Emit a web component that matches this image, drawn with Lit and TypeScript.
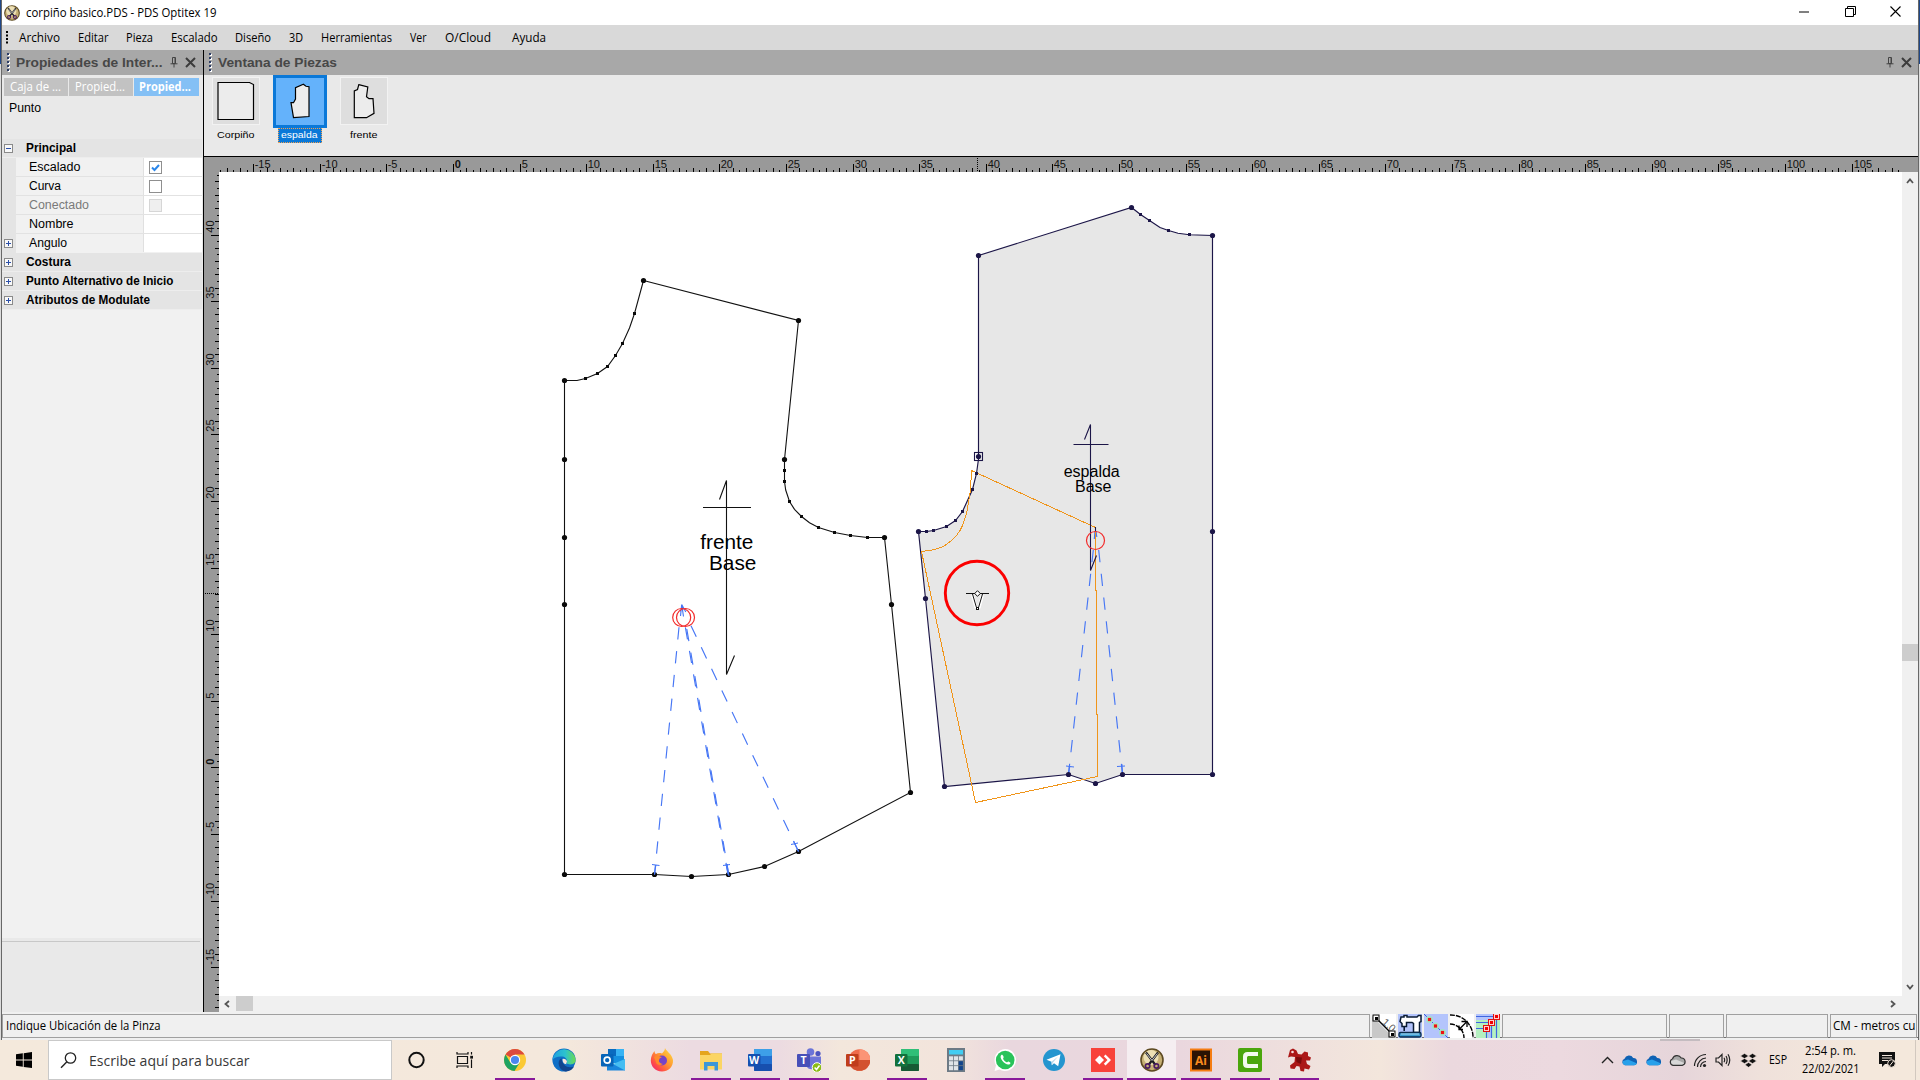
import { LitElement, html, svg, css, nothing } from "lit";
import { customElement } from "lit/decorators.js";

type Pt = [number, number];

/* A line of text set to an exact advance width. */
const label = (text: string, w: number, cls = "", h = 16, base = 12) => html`
  <svg class="lbl ${cls}" width=${w + 2} height=${h}>
    <text x="0" y=${base} textLength=${w} lengthAdjust="spacingAndGlyphs">${text}</text>
  </svg>`;

const pts = (p: Pt[]) => p.map((q) => q.join(",")).join(" ");

const MENU: [string, number, number][] = [
  ["Archivo", 41, 18], ["Editar", 30.5, 17], ["Pieza", 27, 18], ["Escalado", 46.5, 17.5], ["Diseño", 36, 18],
  ["3D", 14, 18], ["Herramientas", 71, 18], ["Ver", 16.5, 18.5], ["O/Cloud", 46, 21], ["Ayuda", 34, 0],
];

/* ---- canvas geometry ---- */
const FRONT: Pt[] = [
  [643.5, 280.5], [798.5, 320.5], [784.5, 459.5], [784.5, 470.5], [784.5, 481.5], [785.7, 490], [789.5, 501.5], [794.5, 509.3],
  [801.5, 516.5], [809.5, 522.8], [818.5, 527.5], [834.5, 532.5], [850.5, 535.5], [867.5, 537.5], [884.5, 537.5], [891.5, 604.5],
  [910.5, 792.5], [798.5, 851.5], [764.5, 866.5], [728.5, 874.5], [691.5, 876.5], [654.5, 874.5], [564.5, 874.5],
  [564.5, 380.5], [577, 380.5], [585.5, 378.5], [597.5, 373.5], [607.5, 366.5], [615.5, 355.5], [622.5, 343.5], [629.5, 328],
  [634.5, 313.5],
];
const FRONT_BIG: Pt[] = [
  [643.5, 280.5], [798.5, 320.5], [784.5, 459.5], [884.5, 537.5], [891.5, 604.5], [910.5, 792.5], [798.5, 851.5],
  [764.5, 866.5], [728.5, 874.5], [691.5, 876.5], [654.5, 874.5], [564.5, 874.5], [564.5, 604.5], [564.5, 537.5],
  [564.5, 459.5], [564.5, 380.5],
];
const FRONT_SMALL: Pt[] = [
  [634.5, 313.5], [622.5, 343.5], [615.5, 355.5], [607.5, 366.5], [597.5, 373.5], [585.5, 378.5], [784.5, 470.5],
  [784.5, 481.5], [789.5, 501.5], [801.5, 516.5], [818.5, 527.5], [834.5, 532.5], [850.5, 535.5], [867.5, 537.5],
];
const BACK: Pt[] = [
  [978.5, 255.5], [1131.5, 207.5], [1140.5, 214.5], [1149.5, 220.5], [1160, 227.5], [1168.5, 230.5], [1178, 233.3],
  [1189.5, 234.8], [1212.5, 235.5], [1212.5, 774.5], [1122.5, 774.5], [1095.5, 783.5], [1068.5, 774.5], [944.5, 786.5],
  [925.5, 598.5], [918.5, 531.5], [926.5, 531.5], [933.5, 530.5], [946.5, 526.5], [955.5, 520.5], [962.5, 511.5],
  [972.5, 489.5], [976.5, 473.5], [978.5, 459],
];
const BACK_BIG: Pt[] = [
  [978.5, 255.5], [1131.5, 207.5], [1212.5, 235.5], [1212.5, 531.5], [1212.5, 774.5], [1122.5, 774.5], [1095.5, 783.5],
  [1068.5, 774.5], [944.5, 786.5], [925.5, 598.5], [918.5, 531.5], [978.5, 456.5],
];
const BACK_SMALL: Pt[] = [
  [1140.5, 214.5], [1149.5, 220.5], [1168.5, 230.5], [1189.5, 234.5], [976.5, 473.5], [972.5, 489.5], [962.5, 511.5],
  [955.5, 520.5], [946.5, 526.5], [933.5, 530.5], [926.5, 531.5],
];
const GHOST: Pt[] = [
  [971.5, 470.5], [1095.5, 527.5], [1095.5, 590], [1096.5, 590], [1096.5, 714], [1097.5, 714], [1097.5, 776.5],
  [975.5, 802.5], [921.5, 551.5], [933.5, 549.8], [941, 547.5], [946.5, 544.5], [952, 540], [956.5, 535.5], [960, 530.5],
  [962.5, 525.5], [965, 518.5], [966.8, 512.5], [968.5, 501.5], [970.5, 490],
];

const ORIGIN_X = 454;
const ORIGIN_Y = 767.3;
const UNIT = 13.32;

const dots = (big: Pt[], small: Pt[], color: string) => svg`
  ${big.map(([x, y]) => svg`<circle cx=${x} cy=${y} r="2.6" fill=${color}/>`)}
  ${small.map(([x, y]) => svg`<rect x=${x - 1.5} y=${y - 1.5} width="3" height="3" fill=${color}/>`)}`;

const leg = (x1: number, y1: number, x2: number, y2: number) =>
  svg`<line x1=${x1} y1=${y1} x2=${x2} y2=${y2} stroke-dasharray="12.3 11.6"/>`;

@customElement("pattern-canvas")
export class PatternCanvas extends LitElement {
  static styles = css`
    :host { display: block; width: 1683px; height: 824px; background: #fff; }
    svg { display: block; }
    text { font-family: "Liberation Sans", Arial, sans-serif; fill: #000; }
    .name { font-size: 20.8px; }
    .name2 { font-size: 16px; }
    .ghost { shape-rendering: crispEdges; }
  `;
  render() {
    return html`<svg width="1683" height="824" viewBox="219 172 1683 824">
      <g fill="none" stroke="#111" stroke-width="1.1">
        <polygon points=${pts(FRONT)}/>
        <path d="M719.5 499.5L726.5 480.5V674.5L734.5 655.5M703 507.5H751"/>
      </g>
      ${dots(FRONT_BIG, FRONT_SMALL, "#0a0a0a")}
      <text class="name" x="700.2" y="549">frente</text>
      <text class="name" x="709" y="570">Base</text>
      <polygon points=${pts(BACK)} fill="#e7e7e7" stroke="#1c1648" stroke-width="1.15"/>
      <g fill="none" stroke="#4676f5" stroke-width="1.15">
        ${leg(679, 627.3, 654.5, 874.5)}
        ${leg(685.4, 627.3, 728, 874.5)} ${leg(686.8, 629, 729, 876)}
        ${leg(691, 625.7, 798.5, 851.5)}
        ${leg(1093.3, 550, 1068.5, 774.5)} ${leg(1098.7, 550, 1122.5, 774.5)}
        <path d="M680.5 616L681.7 604.5L683.5 616.5M681.7 604.5L685.8 612M679.8 611L683 608
          M652 864.5L659.5 865.5M655.8 865L654.5 874.5M723 865.5L730 864.5M727 864L728.5 874.5M726 864L728.5 874.5
          M791 844.5L798 843M793.5 841L798.5 851.5M1066 766L1074 767M1069.5 766L1068.5 774.5M1117 766.5L1125 766M1121.8 764L1122.5 774.5
          M1095 531L1094.3 539M1096 531L1096.8 537"/>
      </g>
      <polygon class="ghost" points=${pts(GHOST)} fill="none" stroke="#f0951a" stroke-width="1"/>
      <g fill="none" stroke="#1c1648" stroke-width="1.1">
        <path d="M1084.5 439.5L1090.5 424.5V570.5L1096.5 555.5M1073.5 444.5H1108.5"/>
        <rect x="974.5" y="452.5" width="8" height="8"/>
        <path d="M1095.5 527V532"/>
      </g>
      ${dots(BACK_BIG, BACK_SMALL, "#1c1648")}
      <text class="name2" x="1063.7" y="477">espalda</text>
      <text class="name2" x="1075" y="492">Base</text>
      <g fill="none" stroke="#f22a2a" stroke-width="1.2">
        <circle cx="681.7" cy="617.5" r="9"/><circle cx="685.5" cy="617.5" r="9"/>
        <circle cx="1095.5" cy="540.5" r="9"/>
      </g>
      <circle cx="977" cy="593" r="31.7" fill="none" stroke="#fb0000" stroke-width="2.9"/>
      <path d="M972.5 595L976 608M982.5 595L979 608" stroke="#fff" stroke-width="3" fill="none"/>
      <g fill="#fff" stroke="#111" stroke-width="1">
        <path d="M966 593.5H989" fill="none"/>
        <path d="M972.5 594L976.3 607M982.5 594L978.7 607" fill="none"/>
        <path d="M977.5 590.7L980.3 593.5L977.5 596.3L974.7 593.5Z"/>
        <rect x="976.5" y="607.5" width="2" height="2"/>
      </g>
    </svg>`;
  }
}

@customElement("ruler-bar")
export class RulerBar extends LitElement {
  static properties = { vertical: { type: Boolean } };
  declare vertical: boolean;
  static styles = css`
    :host { display: block; background: #999; }
    svg { display: block; }
    text { font: 11px "Liberation Sans", Arial, sans-serif; fill: #111; }
    text.zero { font-weight: 700; }
    path { stroke: #000; fill: none; shape-rendering: crispEdges; }
  `;
  render() {
    let d = "";
    const marks: [number, number][] = [];
    if (this.vertical) {
      for (let i = -36; i <= 89; i++) {
        const y = Math.round(ORIGIN_Y - (i * UNIT) / 2) + 0.5;
        if (y < 173 || y > 1011) continue;
        d += `M${i % 10 === 0 ? 211 : i % 2 === 0 ? 215 : 217} ${y}H219`;
        if (i % 10 === 0) marks.push([i / 2, y]);
      }
      return html`<svg width="15" height="840" viewBox="204 172 15 840">
        <path d=${d}/><path d="M205 593.5H219" stroke-dasharray="1 1"/>
        ${marks.map(([n, y]) => svg`<text class=${n === 0 ? "zero" : ""} transform="translate(213.5 ${y}) rotate(-90)" x="2.8" y="0">${n}</text>`)}
      </svg>`;
    }
    for (let i = -35; i <= 217; i++) {
      const x = Math.round(ORIGIN_X + (i * UNIT) / 2) - 0.5;
      if (x < 219) continue;
      d += `M${x} ${i % 10 === 0 ? 164 : i % 2 === 0 ? 168 : 170}V172`;
      if (i % 10 === 0) marks.push([i / 2, x]);
    }
    return html`<svg width="1714" height="15" viewBox="204 157 1714 15">
      <path d=${d}/><path d="M977.5 158V172" stroke-dasharray="1 1"/>
      ${marks.map(([n, x]) => svg`<text class=${n === 0 ? "zero" : ""} x=${x + 1.2} y="167.5">${n}</text>`)}
    </svg>`;
  }
}

const scissors = svg`
  <circle cx="12" cy="12" r="11" fill="#c6b074" stroke="#5d4a22" stroke-width="1.6"/>
  <circle cx="11" cy="9.5" r="7.5" fill="#ecdfb4"/>
  <path d="M6 4.5L15.5 17M18 4.5L8.5 17" stroke="#1c1c22" stroke-width="2.2"/>
  <path d="M6.6 5.5L12 12.4M17.4 5.5L12 12.4" stroke="#f4f4f4" stroke-width=".8"/>
  <circle cx="7.6" cy="18" r="2.2" fill="none" stroke="#4b1c63" stroke-width="1.7"/>
  <circle cx="16.4" cy="18" r="2.2" fill="none" stroke="#4b1c63" stroke-width="1.7"/>`;

const office = (letter: string, dark: string, c1: string, c2: string, c3: string) => svg`
  <rect x="6" y="1" width="18" height="22" rx="1.2" fill=${c2}/>
  <rect x="6" y="1" width="18" height="7" rx="1" fill=${c1}/>
  <rect x="6" y="16" width="18" height="7" rx="1" fill=${c3}/>
  <rect x="0" y="6" width="12.5" height="12.5" rx="1" fill=${dark}/>
  <text x="6.2" y="16" text-anchor="middle" class="app-letter">${letter}</text>`;

const APPS: { icon: unknown; open?: boolean; active?: boolean }[] = [
  { icon: svg`<circle cx="11.500" cy="12" r="7.2" fill="none" stroke="#111" stroke-width="2"/>` },
  { icon: svg`<path d="M3.500 8.500H13.500V15.500H3.500ZM3 4V6H14V4M3 20V18H14V20M17.500 4V6.500M17.500 11.500V20" fill="none" stroke="#111" stroke-width="1.2"/><rect x="16.2" y="7.8" width="2.8" height="2.8" fill="#111"/>` },
  { open: true, icon: svg`<circle cx="12" cy="12" r="11" fill="#fbc934"/>
      <path d="M12 12L2.5 6.5A11 11 0 0 1 21.5 6.5H12Z" fill="#dc4a3d"/><path d="M2.5 6.5A11 11 0 0 0 11.5 23L16.8 14.6L7.3 14.6Z" fill="#1ea362"/>
      <circle cx="12" cy="12" r="5.2" fill="#fff"/><circle cx="12" cy="12" r="4.1" fill="#4a86ee"/>` },
  { icon: svg`<defs><linearGradient id="eg" x1="0" x2="1"><stop offset="0" stop-color="#1f9fe0"/><stop offset=".55" stop-color="#2cc2cf"/><stop offset="1" stop-color="#6bdb4f"/></linearGradient></defs>
      <circle cx="12" cy="12" r="11.6" fill="#0f6fc6"/><path d="M.6 11A11.6 11.6 0 0 1 23.6 12C23.6 17 17 17.2 14.3 15.3C16 13 14.5 9 10.5 8.6C6 8 2 9.500 .6 12Z" fill="url(#eg)"/>
      <path d="M9.500 10.200C4 13 7 22.500 13.500 23.500C18 23.400 20.800 21 22 18.500C16 20.600 10.500 18 9.500 10.200Z" fill="#11458f"/><path d="M10.600 11A3.400 3.400 0 0 1 15 13.500C14.500 15 14 15.200 14.400 16.200C11.500 16 10.300 13.500 10.600 11Z" fill="#f4e6dc"/>` },
  { icon: svg`<rect x="7" y="1" width="16" height="14" fill="#1590e0"/><rect x="15" y="1" width="8" height="7" fill="#38b3f4"/><rect x="7" y="1" width="8" height="7" fill="#0a6bc0"/>
      <path d="M6 12L15 17L24 11V22.500H6Z" fill="#1a86dc"/><path d="M24 11V22.500L12 16Z" fill="#45bdf2"/><rect x="0" y="6" width="12.500" height="12.500" rx="1" fill="#0864b8"/>
      <circle cx="6.200" cy="12.200" r="3" fill="none" stroke="#fff" stroke-width="1.700"/>` },
  { icon: svg`<defs><linearGradient id="ff" x1="1" y1="0" x2="0" y2="1"><stop offset="0" stop-color="#ffe645"/><stop offset=".45" stop-color="#ff9630"/><stop offset=".75" stop-color="#ff4a48"/><stop offset="1" stop-color="#e3168d"/></linearGradient></defs>
      <path d="M15 0C16 3 22 6 23 12C23.500 19 18 23.500 12 23.500C5 23.500 .8 18 .8 12.500C.8 8 3 5 4.500 3C4.500 5 5.500 6 6 6C8 4.800 10 5 12 5.500C13 4 15 3 15 0Z" fill="url(#ff)"/>
      <circle cx="12" cy="12.500" r="5" fill="#7544c9"/><path d="M4 9C7 6.500 9 8 12 9C10 10 9.500 10.500 9 12C8.500 14 10 15.500 13 16C10.500 17.500 7.500 17 6.500 15.500Z" fill="#ff8a2b"/>` },
  { open: true, icon: svg`<path d="M1 3H9L11 5.500H23V21H1Z" fill="#e5a51d"/><path d="M1 7H11L12.500 5.500H23V21.500H1Z" fill="#fbd564"/><path d="M5 14H19V22.500H15.500V18H8.500V22.500H5Z" fill="#3c97d8"/>` },
  { open: true, icon: office("W", "#1450b0", "#3d9fe8", "#2370d0", "#174fae") },
  { open: true, icon: svg`<circle cx="13.500" cy="4" r="3.800" fill="#6b74d8"/><circle cx="21" cy="5.500" r="2.600" fill="#4c54c0"/><path d="M10 8.500H24V16C24 19 21 20 19 18.500C17 22 12 22 10 19Z" fill="#6d75d9"/>
      <rect x="0" y="6" width="13" height="13" rx="1" fill="#474fb8"/><text x="6.500" y="16" text-anchor="middle" class="app-letter">T</text>
      <circle cx="20" cy="19.500" r="4.800" fill="#8cbd18" stroke="#fff"/><path d="M17.600 19.500L19.500 21.500L22.500 17.500" stroke="#fff" stroke-width="1.500" fill="none"/>` },
  { icon: svg`<circle cx="13.500" cy="12" r="10.800" fill="#ee6b4b"/><path d="M13.500 1.200A10.800 10.800 0 0 1 24.300 12H13.500Z" fill="#fb9476"/><path d="M2.700 12H24.300A10.800 10.800 0 0 1 2.700 12Z" fill="#d3522f"/>
      <rect x="0" y="6" width="12.500" height="12.500" rx="1" fill="#c03d1c"/><text x="6.300" y="16" text-anchor="middle" class="app-letter">P</text>` },
  { open: true, icon: office("X", "#12713c", "#30bf78", "#1f9a5a", "#175a35") },
  { icon: svg`<rect x="3" y="0" width="18" height="24" fill="#6d7a85"/><rect x="5" y="2" width="14" height="4.500" fill="#41cdf2"/>
      ${[0, 1, 2].map((r) => [0, 1, 2].map((c) => svg`<rect x=${5 + c * 4.900} y=${8.300 + r * 4.900} width="4.100" height="4.100" fill=${c === 2 && r > 0 ? "#12458c" : "#dfe4e8"}/>`))}` },
  { open: true, icon: svg`<path d="M12 1A11 11 0 1 1 6.500 21.500L1.500 23L3 17.500A11 11 0 0 1 12 1Z" fill="#fff"/><circle cx="12.200" cy="12" r="9.300" fill="#29c35a"/>
      <path d="M8.500 6.800C7 8 7.300 10.500 9.500 13C12 16 15 17.500 17 16C18 15 17.500 14.500 15.500 13.500C14.500 13.200 14.500 15 13 14C11.500 13 10.500 11.800 10 10.700C11.500 9.500 10 6.500 8.500 6.800Z" fill="#fff"/>` },
  { icon: svg`<circle cx="12" cy="12" r="11" fill="#2495cf"/><path d="M4.500 11.800L18.500 6.300L16.200 18.200L12 15.200L9.800 17.300L9.500 13.700Z" fill="#fff"/><path d="M9.500 13.700L16 8.600L11 14.500L9.800 17.300Z" fill="#bcd9ea"/>` },
  { open: true, icon: svg`<rect width="24" height="24" fill="#f8423a"/><path d="M8.500 7.500L13 12L8.500 16.500L4 12Z" fill="#fff"/><path d="M12.800 8.200L14.500 6.500L20 12L14.500 17.500L12.800 15.800L16.500 12Z" fill="#fff"/>` },
  { open: true, active: true, icon: scissors },
  { open: true, icon: svg`<rect x="2" y="1.500" width="20" height="21" fill="#2a1304" stroke="#f57c12" stroke-width="2"/><text x="12" y="16.500" text-anchor="middle" class="ai-letter">Ai</text>` },
  { open: true, icon: svg`<rect width="24" height="24" rx="2" fill="#4ba60d"/><path d="M20 4H9.500C6.500 4 5 5.500 5 8.500V15.500C5 18.500 6.500 20 9.500 20H20V16H11C9.700 16 9 15.500 9 14.200V9.800C9 8.500 9.700 8 11 8H20Z" fill="#f3faee"/>` },
  { open: true, icon: svg`<path d="M3 2L6 .5L9.500 2.500L11 6L14.500 6.500L17.500 3.500L21 4.500L21 8L24 9.500L23 12.500L19 12.500L20 16L23.500 18L22 21.500L17.500 20.500L17 23.500L13.500 23L12.500 18.500L9.500 18L7.500 21L3.500 20.500L3 17.500L7.500 14L8 9L4 8.500L1 9.500Z" fill="#ab1717"/>
      <path d="M9 9L15 9.500L14 16L9.500 14Z" fill="#7a0b0b"/><circle cx="5.500" cy="4" r="1.300" fill="#f4dede"/>` },
];

const cloud = (fill: string, top: string, stroke = "none") => html`<svg width="17" height="12" viewBox="0 0 17 12">
  <path d="M4 11.300A3.400 3.400 0 0 1 3.500 4.800A4.800 4.800 0 0 1 12.200 4A3.700 3.700 0 0 1 13.200 11.300Z" fill=${top}/>
  <path d="M4 11.300A3.400 3.400 0 0 1 2 7L7 5.500L14 8.500L15.800 9.500A3 3 0 0 1 13.200 11.300Z" fill=${fill}/>
  <path d="M4 11.300A3.400 3.400 0 0 1 3.500 4.800A4.800 4.800 0 0 1 12.200 4A3.700 3.700 0 0 1 13.200 11.300Z" fill="none" stroke=${stroke} stroke-width="1.200"/></svg>`;

const pin = html`<svg width="8" height="11" viewBox="0 0 8 11"><path d="M2.500 .5H5.500V6.500H2.500ZM.5 6.800H7.500M4 7V10.500M5 1V6" fill="none" stroke="#444" stroke-width="1"/></svg>`;
const cross = html`<svg width="11" height="11" viewBox="0 0 11 11"><path d="M1 1L10 10M10 1L1 10" stroke="#3c3c3c" stroke-width="2"/></svg>`;
const box = (plus: boolean) => html`<svg width="9" height="9"><rect x=".5" y=".5" width="8" height="8" fill="#f8f8f8" stroke="#8a8a8a"/>
  <path d=${plus ? "M2 4.500H7M4.500 2V7" : "M2 4.500H7"} stroke="#2c4fa8"/></svg>`;

@customElement("app-root")
export class AppRoot extends LitElement {
  static styles = css`
    :host { display: block; width: 1920px; height: 1080px; overflow: hidden; font-family: "Liberation Sans", Arial, sans-serif; }
    * { box-sizing: border-box; }
    svg { display: block; flex: none; }
    .lbl { overflow: visible; font-family: "Open Sans", "Noto Sans", sans-serif; font-size: 12px; fill: #000; }
    .arial { font-family: "Liberation Sans", Arial, sans-serif; font-size: 12px; }
    .bold { font-weight: 700; }
    .dim { fill: #7a7a7a; }
    .white { fill: #fff; }
    .dock { font-family: "Liberation Sans", Arial, sans-serif; font-size: 13px; font-weight: 700; fill: #474747; }
    .tiny { font-family: "Liberation Sans", Arial, sans-serif; font-size: 9.500px; }
    .search-text { font-size: 15px; fill: #383838; }
    .screen { display: flex; flex-direction: column; width: 1920px; height: 1080px; }
    .shell { display: grid; grid-template-columns: 2px 1916px 2px; height: 1040px; }
    .edge { display: flex; flex-direction: column; background: #dcdcdc; }
    .edge::before { content: ""; height: 64px; background: #1f4788; }
    .edge.left { border-right: 1px solid #686868; }
    .edge.right { border-left: 1px solid #686868; }
    .window { display: flex; flex-direction: column; background: #f0f0f0; }
    .title { display: flex; align-items: center; height: 25px; background: #fff; padding: 0 17px 0 2px; }
    .title .lbl { margin-left: 5.500px; }
    .controls { display: flex; gap: 34.500px; margin-left: auto; padding-bottom: 3px; }
    .menu { display: flex; align-items: center; height: 25px; background: #d9d9d9; padding-left: 4px; }
    .menu .items { display: flex; padding-left: 10px; }
    .body { display: grid; grid-template-columns: 201px 1px 1714px; height: 962px; }
    .divider { background: #000; }
    .side { display: flex; flex-direction: column; background: #e9e9e9; }
    .bar { display: flex; align-items: center; height: 25px; background: #a8a8a8; padding-left: 5px; flex: none; }
    .bar .lbl { margin-left: 6px; }
    .bar .end { display: flex; align-items: center; gap: 7px; margin-left: auto; padding-bottom: 1px; }
    .bar .end.l { padding-right: 7.500px; }
    .bar .end.r { padding-right: 6px; }
    .tabs { display: flex; gap: 1px; padding: 3px 0 0 2px; height: 21px; }
    .tab { width: 64px; height: 18px; background: #c2c2c2; padding: 1px 0 0 6px; }
    .tab.on { width: 65px; background: #84c0f5; padding-left: 5px; }
    .kind { height: 43px; padding: 4px 0 0 7px; }
    .grid { display: flex; flex-direction: column; width: 200px; background: #f1f1f1; height: 799px; }
    .row { display: grid; grid-template-columns: 14px 127px 59px; height: 19px; border-bottom: 1px solid #e2e2e2; }
    .row .g { display: flex; align-items: center; padding-left: 2px; background: #e4e4e4; margin-bottom: -1px; }
    .row .n { padding: 1px 0 0 13px; background: #f1f1f1; }
    .row .v { display: flex; align-items: center; background: #fff; border-left: 1px solid #e0e0e0; padding-left: 4.500px; }
    .row.head { grid-template-columns: 14px 1fr; border-bottom-color: #ededed; background: #e4e4e4; }
    .row.head .g { margin: 0; }
    .row.head .n { background: #e4e4e4; padding: 1px 0 0 10px; }
    .row.last { border-bottom-color: #f1f1f1; }
    .check { width: 13px; height: 13px; border: 1px solid #8f8f8f; background: #fff; }
    .check.off { border-color: #d6d6d6; background: #efefef; }
    .help { flex: 1; margin-top: 3px; border-top: 1px solid #c8c8c8; width: 198px; }
    .main { display: flex; flex-direction: column; }
    .pieces { display: flex; gap: 10px; height: 81px; background: #e9e9e9; padding-left: 5px; }
    .piece { display: flex; flex-direction: column; align-items: center; width: 54px; }
    .thumb { width: 48px; height: 48px; margin: 2px 0 3px; background: #dedede; border: 1px solid #f2f2f2; }
    .piece.on .thumb { width: 54px; height: 53px; margin: 0; background: #64b2fb; border: 3px solid #0a78d8; }
    .cap { display: flex; justify-content: center; height: 15px; padding: 1px 0 0 2px; }
    .piece.on .cap { background: #0a78d8; border: 1px dotted #f0a050; padding: 0 1px 0 2px; }
    .rulertop { border-top: 1px solid #000; height: 16px; }
    .work { display: grid; grid-template-columns: 15px 1683px 16px; grid-template-rows: 824px 16px; height: 840px; }
    .vr { grid-row: span 2; }
    .vs { display: flex; flex-direction: column; align-items: center; background: #f0f0f0; padding: 6px 0; }
    .vs .thumb-v { width: 16px; height: 17px; background: #cdcdcd; margin: 460px 0 auto; }
    .hs { display: flex; align-items: center; background: #f0f0f0; padding: 0 22px 1px 5px; grid-column: span 2; }
    .hs .thumb-h { width: 17px; height: 15px; background: #cdcdcd; margin: 0 auto 0 6px; }
    .status { display: flex; height: 26px; padding-top: 2px; border-bottom: 1px solid #6f6f6f; gap: 2px; background: #f0f0f0; }
    .cell { height: 24px; border: 1px solid #a0a0a0; padding: 3px 0 0 3px; overflow: hidden; flex: none; }
    .c1 { width: 1368px; padding-left: 2.500px; } .c2 { width: 165px; } .c3 { width: 55px; } .c4 { width: 102px; } .c5 { width: 87px; padding-left: 2px; }
    .tools { display: flex; gap: 2px; }
    .taskbar { position: relative; display: flex; height: 40px; background: linear-gradient(90deg, #f4e9dc 0, #f4e8dc 570px, #ecdbe1 690px, #ecdbe1 780px, #f3e7dc 840px, #f2e4dc 950px, #e9d7de 1010px, #ead7de 1180px, #efe0dd 1300px, #f3e6dc 1380px, #ebd8de 1450px, #ecd9df 1560px, #e6d5da 1680px, #efe1db 1760px, #f4e8dc 1860px); }
    .taskbar::before { content: ""; position: absolute; left: 1660px; top: -1px; width: 40px; height: 2px; background: #c4bcc0; }
    .start { display: flex; align-items: center; width: 48px; padding-left: 16px; }
    .search { display: flex; align-items: center; width: 344px; height: 40px; background: #fff; border: 1px solid #c9c9c9; padding-left: 11px; gap: 11.500px; }
    .apps { display: flex; }
    .app { display: flex; flex-direction: column; align-items: center; justify-content: flex-end; width: 49px; height: 40px; }
    .app.active { background: #f5eef1; }
    .app svg { margin-bottom: 6px; }
    .ul { width: 40px; height: 2px; background: #88189a; }
    .app.active .ul { width: 49px; }
    .app .ul.none { background: transparent; }
    .app-letter { font: bold 10.500px "Open Sans", sans-serif; fill: #fff; }
    .ai-letter { font: bold 12px "Open Sans", sans-serif; fill: #f98a1e; }
    .tray { display: flex; align-items: center; margin-left: auto; }
    .tray > * { margin-right: 7.200px; }
    .tray .esp { margin: 0 0 0 5px; }
    .clock { display: flex; flex-direction: column; align-items: center; gap: 2px; width: 60px; margin: 0 17px 0 13px; }
    .peek { width: 1px; height: 40px; background: #d2c8bf; margin: 0 4px 0 12px; }
  `;

  row(name: string, w: number, value: unknown, o: { box?: boolean; dim?: boolean; last?: boolean } = {}) {
    return html`<div class="row ${o.last ? "last" : ""}">
      <div class="g">${o.box ? box(true) : nothing}</div>
      <div class="n">${label(name, w, `arial ${o.dim ? "dim" : ""}`)}</div>
      <div class="v">${value}</div></div>`;
  }
  head(name: string, w: number, plus = true) {
    return html`<div class="row head"><div class="g">${box(plus)}</div><div class="n">${label(name, w, "arial bold")}</div></div>`;
  }
  grip() {
    return html`<svg width="3" height="19">${[0, 1, 2, 3, 4].map((i) => svg`<rect x="1" y=${i * 4 + 1} width="2" height="2" fill="#fff"/><rect x="0" y=${i * 4} width="2" height="2" fill="#2c3d66"/>`)}</svg>`;
  }

  render() {
    return html`<div class="screen">
      <div class="shell">
        <div class="edge left"></div>
        <div class="window">
          <div class="title">
            <svg width="16" height="16" viewBox="0 0 24 24">${scissors}</svg>
            ${label("corpiño basico.PDS - PDS Optitex 19", 190.500)}
            <div class="controls">
              <svg width="11" height="11"><path d="M0 6H10" stroke="#000"/></svg>
              <svg width="11" height="11"><path d="M.5 2.500H8.500V10.500H.5ZM2.500 2.500V.5H10.500V8.500H8.500" fill="none" stroke="#000"/></svg>
              <svg width="11" height="11"><path d="M.5 .5L10.500 10.500M10.500 .5L.5 10.500" stroke="#000" stroke-width="1.100"/></svg>
            </div>
          </div>
          <div class="menu">
            <svg width="3" height="13"><path d="M1 0V13" stroke="#000" stroke-width="2" stroke-dasharray="2 1.500"/></svg>
            <div class="items">
              ${MENU.map(([t, w, gap]) => html`<span style="width:${w + gap}px">${label(t, w)}</span>`)}
            </div>
          </div>
          <div class="body">
            <div class="side">
              <div class="bar">${this.grip()}${label("Propiedades de Inter...", 146.500, "dock")}
                <div class="end l">${pin}${cross}</div></div>
              <div class="tabs">
                <div class="tab">${label("Caja de ...", 51, "white")}</div>
                <div class="tab">${label("Propied...", 50, "white")}</div>
                <div class="tab on">${label("Propied...", 52, "white bold")}</div>
              </div>
              <div class="kind">${label("Punto", 32, "arial")}</div>
              <div class="grid">
                ${this.head("Principal", 50, false)}
                ${this.row("Escalado", 51.500, html`<div class="check"><svg width="11" height="11"><path d="M2 5.500L4.500 8L9 3" fill="none" stroke="#2a86ea" stroke-width="2"/></svg></div>`)}
                ${this.row("Curva", 32, html`<div class="check"></div>`)}
                ${this.row("Conectado", 60, html`<div class="check off"></div>`, { dim: true })}
                ${this.row("Nombre", 44.500, nothing)}
                ${this.row("Angulo", 38, nothing, { box: true, last: true })}
                ${this.head("Costura", 45)}
                ${this.head("Punto Alternativo de Inicio", 147.500)}
                ${this.head("Atributos de Modulate", 124)}
              </div>
              <div class="help"></div>
            </div>
            <div class="divider"></div>
            <div class="main">
              <div class="bar">${this.grip()}${label("Ventana de Piezas", 119, "dock")}
                <div class="end r">${pin}${cross}</div></div>
              <div class="pieces">
                <div class="piece">
                  <div class="thumb"><svg width="46" height="46"><path d="M5 4.500H36.500L40.500 6.500V41.500H5Z" fill="#ececec" stroke="#000" stroke-width="1.200"/></svg></div>
                  <div class="cap">${label("Corpiño", 37.500, "tiny", 12, 9)}</div>
                </div>
                <div class="piece on">
                  <div class="thumb"><svg width="48" height="47" viewBox="276 78 48 47"><path d="M303.300 84.300L295.500 87.700V99L293.500 102.700H291L293.500 117.500L309 116.500V86.700L306 86.300Z" fill="#ececec" stroke="#000" stroke-width="1.200"/></svg></div>
                  <div class="cap">${label("espalda", 36.500, "tiny white", 12, 9)}</div>
                </div>
                <div class="piece">
                  <div class="thumb"><svg width="46" height="46" viewBox="341 78 46 46"><path d="M358.800 84.700L367.800 87L366.500 96.700L369 98.700H373L374 113.300L366.500 117.700H354.300V91L357.500 89.500Z" fill="#ececec" stroke="#000" stroke-width="1.200"/></svg></div>
                  <div class="cap">${label("frente", 27.500, "tiny", 12, 9)}</div>
                </div>
              </div>
              <div class="rulertop"><ruler-bar></ruler-bar></div>
              <div class="work">
                <ruler-bar class="vr" vertical></ruler-bar>
                <pattern-canvas></pattern-canvas>
                <div class="vs">
                  <svg width="8" height="6"><path d="M1 5L4 1.500L7 5" fill="none" stroke="#555" stroke-width="1.800"/></svg>
                  <div class="thumb-v"></div>
                  <svg width="8" height="6"><path d="M1 1L4 4.500L7 1" fill="none" stroke="#555" stroke-width="1.800"/></svg>
                </div>
                <div class="hs">
                  <svg width="6" height="8"><path d="M5 1L1.500 4L5 7" fill="none" stroke="#555" stroke-width="1.800"/></svg>
                  <div class="thumb-h"></div>
                  <svg width="6" height="8"><path d="M1 1L4.500 4L1 7" fill="none" stroke="#555" stroke-width="1.800"/></svg>
                </div>
              </div>
            </div>
          </div>
          <div class="status">
            <div class="cell c1">${label("Indique Ubicación de la Pinza", 154.500)}</div>
            <div class="tools">
              <svg width="24" height="24"><rect width="24" height="24" fill="#fff"/><path d="M0 2L22 24H0Z" fill="#c8c8c8"/><path d="M4 4L20 20" stroke="#000" stroke-width="1.500"/>
                <rect x="1" y="1" width="6" height="6" fill="#fff" stroke="#000"/><rect x="3" y="3" width="3" height="3"/><rect x="17" y="17" width="6" height="6" fill="#fff" stroke="#000"/><rect x="19" y="19" width="3" height="3"/>
                <text transform="translate(9.500 9) rotate(42)" font-size="10" fill="#555">1.0</text></svg>
              <svg width="24" height="24"><rect width="24" height="24" fill="#b4c4fc"/>
                <path d="M3 3H6V1.500H9V3H19L20.500 1.500H23V7.500L21.500 8.500V18.500H15.500V9.500L14 8.500H8.500V12.500H4V9.500L2 7.500Z" fill="#fff" stroke="#0b1c34" stroke-width="1.500"/>
                <path d="M6.200 12.500V17" stroke="#0b1c34" stroke-width="1.600"/><rect x="1" y="18.500" width="22" height="4.500" rx="1.500" fill="#3b9bd0" stroke="#0b2a4c" stroke-width="1.300"/><path d="M3 20H21" stroke="#a9dcf2"/></svg>
              <svg width="24" height="24"><rect width="24" height="24" fill="#b4c4fc"/><path d="M0 0L24 24" stroke="#3563d8" stroke-dasharray="4 1"/>
                ${[[5.500, 5.500], [11.500, 12], [18.500, 18.500]].map(([x, y]) => svg`<circle cx=${x} cy=${y} r="3.500" fill="#a5e3c4"/><rect x=${x - 1.600} y=${y - 1.600} width="3.200" height="3.200" fill="#f01010"/>`)}</svg>
              <svg width="24" height="24"><rect width="24" height="24" fill="#fff"/><path d="M0 1A22 22 0 0 1 23 24M0 10A14 14 0 0 1 14 24" fill="none" stroke="#000" stroke-width="1.400" stroke-dasharray="5 1"/>
                <path d="M9 15.500L16 8.500M11.500 7.500H17V13M9 11.500V15.500H13" fill="none" stroke="#000" stroke-width="1.300"/></svg>
              <svg width="24" height="24"><rect width="24" height="24" fill="#b4f0c0"/><path d="M0 0H24V6H0Z" fill="#b4c4fc"/><rect x="12" y="14" width="4" height="10" fill="#b4c4fc"/><path d="M0 15H10V24H0Z" fill="#b4f0c0"/>
                <path d="M0 2.500H18M0 8.500H14M0 14.500H9M10.500 17V24M15.500 10V24M20.500 5V24" stroke="#3f66e0" stroke-width="1.200"/>
                ${[[20.500, 2.500], [15.500, 8.500], [10.500, 14.500]].map(([x, y]) => svg`<rect x=${x - 3} y=${y - 3} width="6" height="6" fill="#ffd0d0" stroke="#e01010"/><rect x=${x - 1.500} y=${y - 1.500} width="3" height="3" fill="#f00000"/>`)}</svg>
            </div>
            <div class="cell c2"></div><div class="cell c3"></div><div class="cell c4"></div>
            <div class="cell c5">${label("CM - metros cu", 82.500)}</div>
          </div>
        </div>
        <div class="edge right"></div>
      </div>
      <div class="taskbar">
        <div class="start"><svg width="16" height="16"><path d="M0 2.300L6.800 1.300V7.600H0ZM7.700 1.200L16 0V7.600H7.700ZM0 8.500H6.800V14.800L0 13.800ZM7.700 8.500H16V16L7.700 14.900Z" fill="#000"/></svg></div>
        <div class="search">
          <svg width="17" height="17"><circle cx="10.500" cy="6" r="5.200" fill="none" stroke="#222" stroke-width="1.300"/><path d="M6.700 10L1 15.800" stroke="#222" stroke-width="1.400"/></svg>
          ${label("Escribe aquí para buscar", 160.500, "search-text", 20, 16)}
        </div>
        <div class="apps">
          ${APPS.map((a) => html`<div class="app ${a.active ? "active" : ""}">
            <svg width="24" height="24" viewBox="0 0 24 24">${a.icon}</svg>
            <div class="ul ${a.open ? "" : "none"}"></div></div>`)}
        </div>
        <div class="tray">
          <svg width="13" height="8"><path d="M1 7L6.500 1.500L12 7" fill="none" stroke="#222" stroke-width="1.400"/></svg>
          ${cloud("#28a0ea", "#0f62b4")}${cloud("#28a0ea", "#0f62b4")}${cloud("#d8d8d8", "#a8a8a8", "#333")}
          <svg width="15" height="15" viewBox="0 0 15 15"><path d="M1.500 13A11.500 11.500 0 0 1 13 1.500M4.500 14A9 9 0 0 1 13 5M7.500 14A6 6 0 0 1 13 8.500" fill="none" stroke="#222" stroke-width="1.200"/><circle cx="11.500" cy="12.500" r="1.600" fill="#222"/></svg>
          <svg width="17" height="14" viewBox="0 0 17 14"><path d="M1 5H3.500L7 1.500V12.500L3.500 9H1ZM9 4.800Q10.300 7 9 9.200M11 3Q13.300 7 11 11M13 1.200Q16.500 7 13 12.800" fill="none" stroke="#222" stroke-width="1.200"/></svg>
          <svg width="17" height="15" viewBox="0 0 17 15"><path d="M4.500 .5L8.500 3L4.500 5.500L.5 3ZM12.500 .5L16.500 3L12.500 5.500L8.500 3ZM4.500 5.500L8.500 8L4.500 10.500L.5 8ZM12.500 5.500L16.500 8L12.500 10.500L8.500 8ZM8.500 9.500L12 11.800L8.500 14.300L5 11.800Z" fill="#111" stroke="#efe0dc" stroke-width=".5"/></svg>
          <span class="esp">${label("ESP", 18)}</span>
          <div class="clock">${label("2:54 p. m.", 51)}${label("22/02/2021", 57.500)}</div>
          <svg width="17" height="16" viewBox="0 0 17 16"><path d="M0 0H16V12H6L3 15V12H0Z" fill="#111"/><path d="M3 3.500H13M3 6H13M3 8.500H9" stroke="#f1e5db"/><circle cx="12.500" cy="11.500" r="3.800" fill="#111" stroke="#f1e5db"/><path d="M10.500 14L14.500 9" stroke="#f1e5db"/></svg>
          <div class="peek"></div>
        </div>
      </div>
    </div>`;
  }
}
